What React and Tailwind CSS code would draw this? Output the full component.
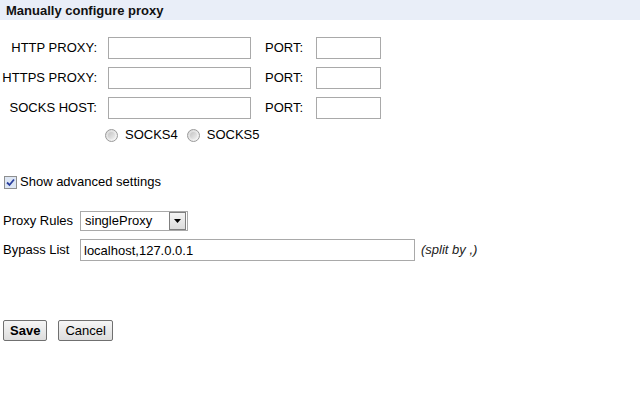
export default function App() {
  const rows = ['HTTP PROXY:', 'HTTPS PROXY:', 'SOCKS HOST:'];

  return (
    <div className="w-[640px] h-[400px] bg-white text-[13px] text-black font-['Liberation_Sans',Arial,sans-serif]">
      {/* Title bar */}
      <div className="h-[20px] bg-[#e9eef8] pl-[6px] leading-[21px] font-bold text-[#111]">Manually configure proxy</div>

      {/* Host / port table */}
      <div className="flex flex-col gap-[8px] pt-[17px]">
        {rows.map(label => (
          <div key={label} className="flex items-center h-[22px]">
            <span className="w-[97px] text-right">{label}</span>
            <input type="text" className="ml-[11px] w-[143px] h-[22px] border border-[#a9a9a9] outline-none px-1" />
            <span className="ml-[14px] w-[51px]">PORT:</span>
            <input type="text" className="w-[65px] h-[22px] border border-[#a9a9a9] outline-none px-1" />
          </div>
        ))}
      </div>

      {/* SOCKS version */}
      <div className="flex items-center h-[14px] mt-[9px] pl-[105px]">
        <Radio />
        <span className="ml-[7px]">SOCKS4</span>
        <span className="ml-[9px]"><Radio /></span>
        <span className="ml-[7px]">SOCKS5</span>
      </div>

      {/* Advanced toggle */}
      <div className="flex items-center h-[14px] mt-[33px] pl-[4px]">
        <Checkbox />
        <span className="ml-[3px]">Show advanced settings</span>
      </div>

      {/* Proxy rules */}
      <div className="flex items-center h-[20px] mt-[22px] pl-[3px]">
        <span className="w-[77px]">Proxy Rules</span>
        <div className="flex items-center w-[108px] h-[20px] border border-[#a9a9a9] bg-white">
          <span className="flex-1 pl-[4px]">singleProxy</span>
          <div className="w-[17px] h-[18px] mr-[1px] border border-[#7f7f7f] bg-gradient-to-b from-[#f4f4f4] to-[#dcdcdc] flex items-center justify-center">
            <svg width="7" height="4" viewBox="0 0 7 4"><path d="M0 0h7L3.5 4z" fill="#000" /></svg>
          </div>
        </div>
      </div>

      <div className="flex items-center h-[22px] mt-[8px] pl-[3px]">
        <span className="w-[77px]">Bypass List</span>
        <input type="text" defaultValue="localhost,127.0.0.1" className="w-[335px] h-[22px] border border-[#a9a9a9] outline-none pl-[3px]" />
        <span className="ml-[6px] italic text-[#222]">(split by ,)</span>
      </div>

      {/* Actions */}
      <div className="flex items-center gap-[11px] mt-[59px] pl-[3px]">
        <button className="h-[21px] px-[6px] border border-[#707070] rounded-[2px] bg-gradient-to-b from-[#f6f6f6] to-[#dddddd] font-bold leading-[19px]">Save</button>
        <button className="h-[21px] px-[6px] border border-[#707070] rounded-[2px] bg-gradient-to-b from-[#f6f6f6] to-[#dddddd] leading-[19px]">Cancel</button>
      </div>
    </div>
  );
}

function Radio() {
  return (
    <span className="block w-[13px] h-[13px] rounded-full border border-[#9a9a9a] bg-gradient-to-br from-[#d8d8d8] to-[#f8f8f8]">
      <span className="block m-[2px] w-[7px] h-[7px] rounded-full bg-gradient-to-br from-[#c4c4c4] to-[#eeeeee]" />
    </span>
  );
}

function Checkbox() {
  return (
    <span className="flex items-center justify-center w-[13px] h-[13px] border border-[#8e8f8f] bg-[#dde6f4]">
      <svg width="9" height="9" viewBox="0 0 9 9"><path d="M1 4.5l2.5 2.5L8 1.5" stroke="#2a3f9e" strokeWidth="1.8" fill="none" /></svg>
    </span>
  );
}
